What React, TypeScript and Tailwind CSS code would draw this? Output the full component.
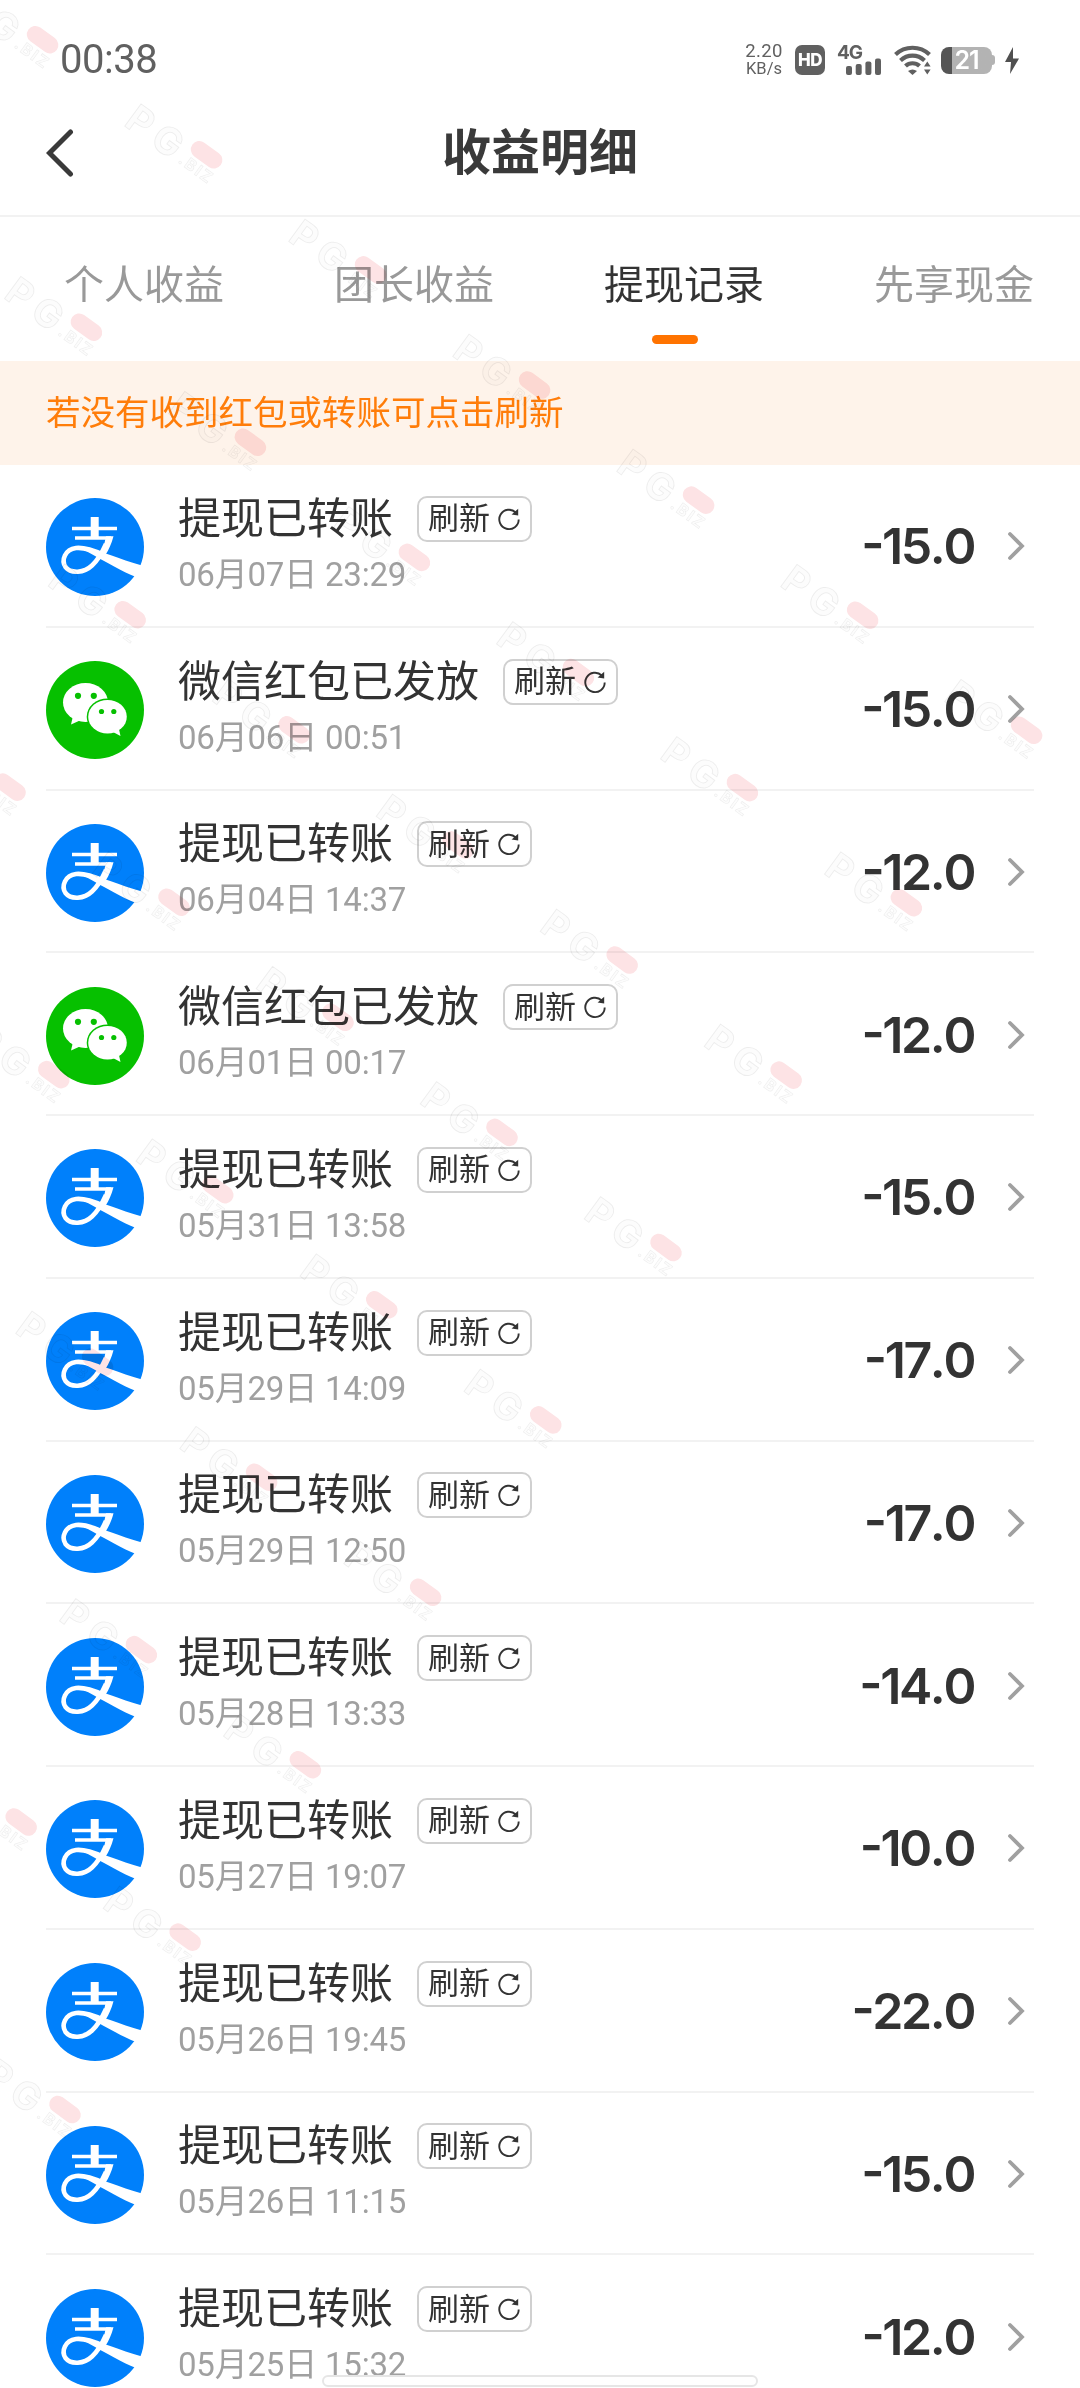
import { useState } from "react";

type Channel = "alipay" | "wechat";

interface WithdrawRecord {
  channel: Channel;
  time: string;
  amount: string;
}

const TABS = ["个人收益", "团长收益", "提现记录", "先享现金"];

const TITLES: Record<Channel, string> = {
  alipay: "提现已转账",
  wechat: "微信红包已发放",
};

const RECORDS: WithdrawRecord[] = [
  { channel: "alipay", time: "06月07日 23:29", amount: "-15.0" },
  { channel: "wechat", time: "06月06日 00:51", amount: "-15.0" },
  { channel: "alipay", time: "06月04日 14:37", amount: "-12.0" },
  { channel: "wechat", time: "06月01日 00:17", amount: "-12.0" },
  { channel: "alipay", time: "05月31日 13:58", amount: "-15.0" },
  { channel: "alipay", time: "05月29日 14:09", amount: "-17.0" },
  { channel: "alipay", time: "05月29日 12:50", amount: "-17.0" },
  { channel: "alipay", time: "05月28日 13:33", amount: "-14.0" },
  { channel: "alipay", time: "05月27日 19:07", amount: "-10.0" },
  { channel: "alipay", time: "05月26日 19:45", amount: "-22.0" },
  { channel: "alipay", time: "05月26日 11:15", amount: "-15.0" },
  { channel: "alipay", time: "05月25日 15:32", amount: "-12.0" },
];

function AlipayIcon() {
  return (
    <svg viewBox="0 0 98 98" className="mt-1 size-[98px] shrink-0">
      <circle cx="49" cy="49" r="49" fill="#0080fb" />
      <g fill="none" stroke="#fff">
        <path d="M26 30.5H71" strokeWidth="3.6" />
        <path d="M48.7 19V41" strokeWidth="8" />
        <path d="M29 40H65" strokeWidth="3.6" />
        <path
          d="M60 46C56 55 52 62 46 67.5C38 75 25 76 19.5 69C15 62 19 51.5 30 50C39 49 49 53 58 57"
          strokeWidth="4.6"
        />
      </g>
      <path d="M60 38.2L67.5 38.2C65.5 46 62.5 52 60 56L51 64C56 56 58 48 60 38.2Z" fill="#fff" />
      <path d="M40 49C55 53 73 61 96 67.5L90 79C76 73.5 60 64 40 53Z" fill="#fff" />
    </svg>
  );
}

function WechatIcon() {
  return (
    <svg viewBox="0 0 98 98" className="mt-1 size-[98px] shrink-0">
      <circle cx="49" cy="49" r="49" fill="#06c000" />
      <ellipse cx="39.5" cy="41.5" rx="22.5" ry="19.5" fill="#fff" />
      <path d="M27 55L25 63.5L35 59Z" fill="#fff" />
      <circle cx="32" cy="34.8" r="3.1" fill="#06c000" />
      <circle cx="47.8" cy="34.8" r="3.1" fill="#06c000" />
      <ellipse cx="61.5" cy="55.7" rx="20.8" ry="18.3" fill="#06c000" />
      <ellipse cx="61.5" cy="55.7" rx="19.3" ry="16.8" fill="#fff" />
      <path d="M66 70.5L74.5 75L72.5 66Z" fill="#fff" />
      <circle cx="55.5" cy="50.5" r="2.6" fill="#06c000" />
      <circle cx="67.8" cy="50.5" r="2.6" fill="#06c000" />
    </svg>
  );
}

function RefreshIcon() {
  return (
    <svg viewBox="0 0 24 24" className="size-6" fill="none">
      <path d="M18.8 5.5A9.7 9.7 0 1 0 21.7 12.5" stroke="#333" strokeWidth="1.9" />
      <path d="M21.2 1.8V8.4L14.6 7.4Z" fill="#333" />
    </svg>
  );
}

function StatusBar() {
  return (
    <div className="flex h-[120px] items-center pl-[60px] pr-[61px] text-[#606060]">
      <span className="font-[Roboto] text-[40px] leading-none tracking-[-0.5px]">00:38</span>
      <div className="ml-auto flex items-center">
        <div className="flex w-[38px] flex-col items-center font-[Roboto] leading-none">
          <span className="text-[18.5px] leading-[17px] tracking-[0.4px]">2.20</span>
          <span className="text-[16.5px] leading-[17px]">KB/s</span>
        </div>
        <div className="ml-3 flex size-[30px] items-center justify-center rounded-[7px] bg-[#606060] font-[Inter] text-[17px] font-extrabold leading-none tracking-[-0.5px] text-white">
          HD
        </div>
        <div className="relative ml-3 h-[30px] w-[44px]">
          <span className="absolute left-0 top-0 font-[Inter] text-[19px] font-bold leading-[15px] tracking-[-1px]">
            4G
          </span>
          <svg viewBox="0 0 44 30" className="h-[30px] w-[44px]" fill="#606060">
            <rect x="9" y="21" width="6" height="9" rx="2" />
            <rect x="18.7" y="19" width="6" height="11" rx="2" />
            <rect x="28.4" y="16.5" width="6" height="13.5" rx="2" />
            <rect x="38" y="13.5" width="6" height="16.5" rx="2" />
          </svg>
        </div>
        <svg viewBox="0 0 38 30" className="ml-[13px] h-[30px] w-[38px]" fill="none">
          <g stroke="#606060" strokeWidth="4.2">
            <path d="M1.5 9.5C11 0.5 26 0.5 35.5 9.5" />
            <path d="M6.5 15.5C13.5 9 23.5 9 30.5 15.5" />
            <path d="M11.5 21C15.5 17.3 21.5 17.3 25.5 21" />
          </g>
          <path d="M14 26C17 24 20 24 23 26L18.5 30Z" fill="#606060" />
          <path d="M30 21.5L33.3 16.5L36.6 21.5ZM30 24.5L33.3 29.5L36.6 24.5Z" fill="#606060" />
        </svg>
        <div className="ml-[9px] flex items-center">
          <div className="flex h-[27px] w-[51px] items-center justify-center overflow-hidden rounded-[8px] bg-linear-to-r from-[#555] from-22% to-[#b3b3b3] to-22%">
            <span className="font-[Inter] text-[25px] font-semibold leading-none tracking-[-1px] text-white">21</span>
          </div>
          <div className="h-[10px] w-[3px] rounded-r-[3px] bg-[#b3b3b3]" />
        </div>
        <svg viewBox="0 0 14 27" className="ml-[10px] h-[27px] w-[14px]" fill="#505050">
          <path d="M8 0L0 15H6L5 27L14 11.5H8Z" />
        </svg>
      </div>
    </div>
  );
}

function RecordRow({ record }: { record: WithdrawRecord }) {
  return (
    <li className="flex h-[162.75px] items-center border-b-2 border-[#f2f2f2]">
      {record.channel === "alipay" ? <AlipayIcon /> : <WechatIcon />}
      <div className="ml-[34px] flex flex-col">
        <div className="flex h-[48px] items-center gap-6">
          <span className="text-[43px] leading-[48px] text-[#333]">{TITLES[record.channel]}</span>
          <button className="flex h-[46px] w-[115px] items-center justify-center gap-[7px] rounded-[10px] border-2 border-[#d0d0d0] text-[31px] leading-none text-[#333]">
            刷新
            <RefreshIcon />
          </button>
        </div>
        <span className="mt-[10px] h-[43px] text-[33px] leading-[44px] tracking-[-0.2px] text-[#a0a0a0]">
          {record.time}
        </span>
      </div>
      <span className="ml-auto mt-[2px] font-[Inter] text-[50px] font-semibold leading-none tracking-[-2.4px] text-[#333] [font-feature-settings:'case'] [font-kerning:none]">
        {record.amount}
      </span>
      <svg viewBox="0 0 18 30" className="ml-[33px] mr-[9px] mt-[2px] h-[30px] w-[18px]" fill="none">
        <path d="M3 3L15 15L3 27" stroke="#a0a0a0" strokeWidth="3.8" strokeLinecap="round" />
      </svg>
    </li>
  );
}

// 斜向平铺的水印，只覆盖左上三角区域
function Watermark() {
  const marks: { x: number; y: number }[] = [];
  for (let r = 0; r < 9; r++) {
    for (let k = -3; k <= 6 - r; k++) {
      const x = 43 + r * 43.8 + k * 164;
      const y = 40 + r * 287.5 + k * 115.1;
      if (x > -30 && y > 0) marks.push({ x, y });
    }
  }
  return (
    <svg
      viewBox="0 0 1080 2388"
      className="pointer-events-none absolute inset-0 h-full w-full mix-blend-multiply"
    >
      {marks.map(({ x, y }, i) => (
        <g key={i} transform={`translate(${x} ${y}) rotate(36)`}>
          <g fill="#000" fillOpacity="0.012" stroke="#000" strokeOpacity="0.07" className="font-[Inter] font-bold">
            <text x="-86" y="25" fontSize="38">P</text>
            <text x="-54" y="25" fontSize="38">G</text>
            <text x="-20" y="23" fontSize="16" letterSpacing="2" strokeWidth="0.7">.BIZ</text>
          </g>
          <rect x="-18" y="-8.5" width="35" height="17" rx="8.5" fill="#fde3e5" />
        </g>
      ))}
    </svg>
  );
}

export default function App() {
  const [tab, setTab] = useState(2);

  return (
    <div className="relative h-[2388px] w-[1080px] overflow-hidden bg-white font-[Roboto,'Noto_Sans_CJK_SC',sans-serif]">
      <StatusBar />

      {/* 标题栏 */}
      <header className="grid h-[97px] grid-cols-[1fr_auto_1fr] items-center border-b-2 border-[#f2f2f2] pb-[29px]">
        <svg viewBox="0 0 28 48" className="ml-[46px] h-[48px] w-[28px]" fill="none">
          <path d="M24.5 3L3.5 24L24.5 45" stroke="#3a3a3a" strokeWidth="5" strokeLinecap="round" />
        </svg>
        <h1 className="text-[49px] font-bold leading-none text-[#3a3a3a]">收益明细</h1>
      </header>

      <nav className="ml-[9px] flex h-[144px]">
        {TABS.map((name, i) => (
          <button
            key={name}
            onClick={() => setTab(i)}
            className={
              "flex w-[270px] shrink-0 flex-col items-center pt-[44px] text-[40px] leading-[50px] " +
              (tab === i ? "text-[#333]" : "text-[#999]")
            }
          >
            {name}
            {tab === i && <span className="mr-[18px] mt-[24px] h-[9px] w-[46px] rounded-full bg-[#ff7300]" />}
          </button>
        ))}
      </nav>

      <div className="flex h-[104px] items-center bg-[#fef3ea] pl-[46px] text-[34.5px] leading-none text-[#ff7d0a]">
        若没有收到红包或转账可点击刷新
      </div>

      <ul className="mx-[46px]">
        {RECORDS.map((r) => (
          <RecordRow key={r.time} record={r} />
        ))}
      </ul>

      <Watermark />

      {/* 系统手势条 */}
      <div className="absolute bottom-[1px] left-[322px] h-[12px] w-[436px] rounded-full border-2 border-[#e6e6e6] bg-white" />
    </div>
  );
}
